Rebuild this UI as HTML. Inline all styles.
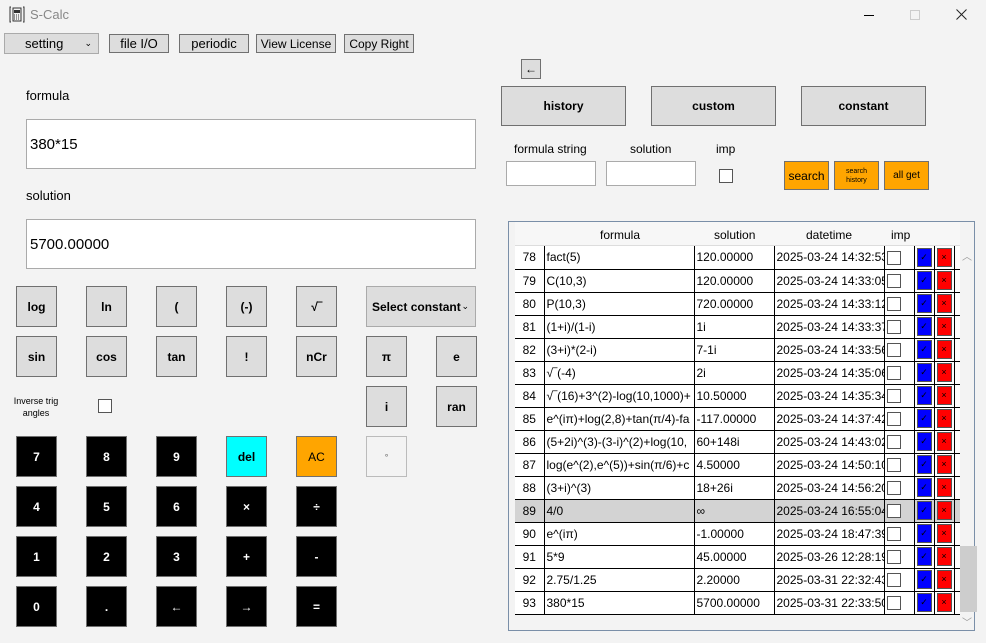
<!DOCTYPE html>
<html><head><meta charset="utf-8"><style>
*{box-sizing:border-box;margin:0;padding:0}
body{width:986px;height:643px;background:#f3f3f3;font-family:"Liberation Sans","DejaVu Sans",sans-serif;font-size:12px;color:#000;position:relative;overflow:hidden}
.a{position:absolute}
.btn{position:absolute;background:#dddddd;border:1px solid #707070;display:flex;align-items:center;justify-content:center;font-size:12px}
.k{width:41px;height:41px;font-weight:bold}
.blk{background:#000;color:#fff;border:1px solid #707070}
.tb{position:absolute;background:#fff;border:1px solid #aaa;font-size:15px;display:flex;align-items:center;padding-left:3px}
table{border-collapse:collapse;table-layout:fixed;font-size:12px}
td{height:23px;border-bottom:1px solid #000;border-left:1px solid #000;white-space:nowrap;overflow:hidden;padding:0 2px}
td.n{border-left:none;text-align:center}
.cb{display:inline-block;width:14px;height:14px;border:1px solid #555;background:#fff;vertical-align:middle}
.bl{display:block;width:15px;height:19px;background:#0000ff;border:1px solid #555;font-size:9px;color:#000;text-align:center;line-height:17px}
.rd{display:block;width:15px;height:19px;background:#ff0000;border:1px solid #555;font-size:9px;color:#000;text-align:center;line-height:17px}
</style></head><body>
<svg class="a" style="left:9px;top:6px" width="16" height="17" viewBox="0 0 16 17"><path d="M2 1H1V16H2M14 1H15V16H14" stroke="#333" fill="none"/><rect x="4" y="2" width="8" height="13" fill="none" stroke="#333"/><rect x="5" y="4" width="6" height="3" fill="#333"/><path d="M5 9h1M7 9h1M9 9h1M5 11h1M7 11h1M9 11h1M5 13h1M7 13h1M9 13h1" stroke="#333"/></svg>
<div class="a" style="left:30px;top:7px;font-size:13px;color:#888">S-Calc</div>
<div class="a" style="left:864px;top:15px;width:10px;height:1px;background:#000"></div>
<div class="a" style="left:910px;top:10px;width:10px;height:10px;border:1px solid #ccc"></div>
<svg class="a" style="left:956px;top:9px" width="11" height="11"><path d="M0.5 0.5L10.5 10.5M10.5 0.5L0.5 10.5" stroke="#222" stroke-width="1"/></svg>

<div class="btn" style="left:4px;top:33px;width:95px;height:21px;border-color:#aaa;justify-content:flex-start;padding-left:20px;font-size:13px">setting<span style="position:absolute;right:6px;font-size:9px">⌄</span></div>
<div class="btn" style="left:109px;top:34px;width:60px;height:19px;font-size:13px">file I/O</div>
<div class="btn" style="left:179px;top:34px;width:70px;height:19px;font-size:13px">periodic</div>
<div class="btn" style="left:256px;top:34px;width:80px;height:19px;font-size:12px">View License</div>
<div class="btn" style="left:344px;top:34px;width:70px;height:19px;font-size:12px">Copy Right</div>

<div class="a" style="left:26px;top:88px;font-size:13px">formula</div>
<div class="tb" style="left:26px;top:119px;width:450px;height:50px">380*15</div>
<div class="a" style="left:26px;top:188px;font-size:13px">solution</div>
<div class="tb" style="left:26px;top:219px;width:450px;height:50px">5700.00000</div>

<div class="btn k" style="left:16px;top:286px">log</div>
<div class="btn k" style="left:86px;top:286px">ln</div>
<div class="btn k" style="left:156px;top:286px">(</div>
<div class="btn k" style="left:226px;top:286px">(-)</div>
<div class="btn k" style="left:296px;top:286px">√‾</div>
<div class="btn" style="left:366px;top:286px;width:110px;height:41px;border-color:#aaa;font-weight:bold;justify-content:flex-start;padding-left:5px">Select constant<span style="position:absolute;right:6px;font-size:9px;font-weight:normal">⌄</span></div>
<div class="btn k" style="left:16px;top:336px">sin</div>
<div class="btn k" style="left:86px;top:336px">cos</div>
<div class="btn k" style="left:156px;top:336px">tan</div>
<div class="btn k" style="left:226px;top:336px">!</div>
<div class="btn k" style="left:296px;top:336px">nCr</div>
<div class="btn k" style="left:366px;top:336px">π</div>
<div class="btn k" style="left:436px;top:336px">e</div>
<div class="a" style="left:8px;top:395px;width:56px;font-size:9px;text-align:center;line-height:12px">Inverse trig angles</div>
<div class="a" style="left:98px;top:399px;width:14px;height:14px;border:1px solid #555;background:#fff"></div>
<div class="btn k" style="left:366px;top:386px">i</div>
<div class="btn k" style="left:436px;top:386px">ran</div>
<div class="btn k blk" style="left:16px;top:436px">7</div>
<div class="btn k blk" style="left:86px;top:436px">8</div>
<div class="btn k blk" style="left:156px;top:436px">9</div>
<div class="btn k" style="left:226px;top:436px;background:#00ffff">del</div>
<div class="btn k" style="left:296px;top:436px;background:#ffa500;font-weight:normal">AC</div>
<div class="btn k" style="left:366px;top:436px;background:#f3f3f3;border-color:#bbb;color:#888;font-size:9px">°</div>
<div class="btn k blk" style="left:16px;top:486px">4</div>
<div class="btn k blk" style="left:86px;top:486px">5</div>
<div class="btn k blk" style="left:156px;top:486px">6</div>
<div class="btn k blk" style="left:226px;top:486px">×</div>
<div class="btn k blk" style="left:296px;top:486px">÷</div>
<div class="btn k blk" style="left:16px;top:536px">1</div>
<div class="btn k blk" style="left:86px;top:536px">2</div>
<div class="btn k blk" style="left:156px;top:536px">3</div>
<div class="btn k blk" style="left:226px;top:536px">+</div>
<div class="btn k blk" style="left:296px;top:536px">-</div>
<div class="btn k blk" style="left:16px;top:586px">0</div>
<div class="btn k blk" style="left:86px;top:586px">.</div>
<div class="btn k blk" style="left:156px;top:586px">←</div>
<div class="btn k blk" style="left:226px;top:586px">→</div>
<div class="btn k blk" style="left:296px;top:586px">=</div>

<div class="btn" style="left:521px;top:59px;width:20px;height:20px">←</div>
<div class="btn" style="left:501px;top:86px;width:125px;height:40px;font-weight:bold">history</div>
<div class="btn" style="left:651px;top:86px;width:125px;height:40px;font-weight:bold">custom</div>
<div class="btn" style="left:801px;top:86px;width:125px;height:40px;font-weight:bold">constant</div>
<div class="a" style="left:514px;top:142px">formula string</div>
<div class="a" style="left:630px;top:142px">solution</div>
<div class="a" style="left:716px;top:142px">imp</div>
<div class="a" style="left:506px;top:161px;width:90px;height:25px;background:#fff;border:1px solid #aaa"></div>
<div class="a" style="left:606px;top:161px;width:90px;height:25px;background:#fff;border:1px solid #aaa"></div>
<div class="a" style="left:719px;top:169px;width:14px;height:14px;background:#fff;border:1px solid #555"></div>
<div class="btn" style="left:784px;top:161px;width:45px;height:29px;background:#ffa500">search</div>
<div class="btn" style="left:834px;top:161px;width:45px;height:29px;background:#ffa500;font-size:7px;line-height:9px;text-align:center">search<br>history</div>
<div class="btn" style="left:884px;top:161px;width:45px;height:29px;background:#ffa500;font-size:10px">all get</div>

<div class="a" style="left:508px;top:221px;width:467px;height:410px;border:1px solid #7a8fa8;background:#f3f3f3"></div>
<div class="a" style="left:515px;top:222px;width:445px;height:24px;background:#f7f7f7;border-bottom:1px solid #ddd"></div>
<div class="a" style="left:600px;top:228px">formula</div>
<div class="a" style="left:714px;top:228px">solution</div>
<div class="a" style="left:806px;top:228px">datetime</div>
<div class="a" style="left:891px;top:228px">imp</div>
<div class="a" style="left:962px;top:248px;color:#999;font-size:10px">︿</div>
<div class="a" style="left:960px;top:546px;width:17px;height:66px;background:#cdcdcd"></div>
<div class="a" style="left:962px;top:614px;color:#999;font-size:10px">﹀</div>
<table class="a" style="left:515px;top:246px;width:445px">
<colgroup><col style="width:29px"><col style="width:150px"><col style="width:80px"><col style="width:110px"><col style="width:30px"><col style="width:20px"><col style="width:20px"><col style="width:6px"></colgroup>
<tbody style="background:#fff">
<tr><td class="n">78</td><td>fact(5)</td><td>120.00000</td><td>2025-03-24 14:32:53</td><td><span class="cb"></span></td><td><span class="bl">✓</span></td><td><span class="rd">×</span></td><td></td></tr>
<tr><td class="n">79</td><td>C(10,3)</td><td>120.00000</td><td>2025-03-24 14:33:05</td><td><span class="cb"></span></td><td><span class="bl">✓</span></td><td><span class="rd">×</span></td><td></td></tr>
<tr><td class="n">80</td><td>P(10,3)</td><td>720.00000</td><td>2025-03-24 14:33:12</td><td><span class="cb"></span></td><td><span class="bl">✓</span></td><td><span class="rd">×</span></td><td></td></tr>
<tr><td class="n">81</td><td>(1+i)/(1-i)</td><td>1i</td><td>2025-03-24 14:33:37</td><td><span class="cb"></span></td><td><span class="bl">✓</span></td><td><span class="rd">×</span></td><td></td></tr>
<tr><td class="n">82</td><td>(3+i)*(2-i)</td><td>7-1i</td><td>2025-03-24 14:33:56</td><td><span class="cb"></span></td><td><span class="bl">✓</span></td><td><span class="rd">×</span></td><td></td></tr>
<tr><td class="n">83</td><td>√‾(-4)</td><td>2i</td><td>2025-03-24 14:35:06</td><td><span class="cb"></span></td><td><span class="bl">✓</span></td><td><span class="rd">×</span></td><td></td></tr>
<tr><td class="n">84</td><td>√‾(16)+3^(2)-log(10,1000)+</td><td>10.50000</td><td>2025-03-24 14:35:34</td><td><span class="cb"></span></td><td><span class="bl">✓</span></td><td><span class="rd">×</span></td><td></td></tr>
<tr><td class="n">85</td><td>e^(iπ)+log(2,8)+tan(π/4)-fa</td><td>-117.00000</td><td>2025-03-24 14:37:42</td><td><span class="cb"></span></td><td><span class="bl">✓</span></td><td><span class="rd">×</span></td><td></td></tr>
<tr><td class="n">86</td><td>(5+2i)^(3)-(3-i)^(2)+log(10,</td><td>60+148i</td><td>2025-03-24 14:43:02</td><td><span class="cb"></span></td><td><span class="bl">✓</span></td><td><span class="rd">×</span></td><td></td></tr>
<tr><td class="n">87</td><td>log(e^(2),e^(5))+sin(π/6)+c</td><td>4.50000</td><td>2025-03-24 14:50:10</td><td><span class="cb"></span></td><td><span class="bl">✓</span></td><td><span class="rd">×</span></td><td></td></tr>
<tr><td class="n">88</td><td>(3+i)^(3)</td><td>18+26i</td><td>2025-03-24 14:56:20</td><td><span class="cb"></span></td><td><span class="bl">✓</span></td><td><span class="rd">×</span></td><td></td></tr>
<tr style="background:#d3d3d3"><td class="n">89</td><td>4/0</td><td>∞</td><td>2025-03-24 16:55:04</td><td><span class="cb"></span></td><td><span class="bl">✓</span></td><td><span class="rd">×</span></td><td></td></tr>
<tr><td class="n">90</td><td>e^(iπ)</td><td>-1.00000</td><td>2025-03-24 18:47:39</td><td><span class="cb"></span></td><td><span class="bl">✓</span></td><td><span class="rd">×</span></td><td></td></tr>
<tr><td class="n">91</td><td>5*9</td><td>45.00000</td><td>2025-03-26 12:28:19</td><td><span class="cb"></span></td><td><span class="bl">✓</span></td><td><span class="rd">×</span></td><td></td></tr>
<tr><td class="n">92</td><td>2.75/1.25</td><td>2.20000</td><td>2025-03-31 22:32:43</td><td><span class="cb"></span></td><td><span class="bl">✓</span></td><td><span class="rd">×</span></td><td></td></tr>
<tr><td class="n">93</td><td>380*15</td><td>5700.00000</td><td>2025-03-31 22:33:50</td><td><span class="cb"></span></td><td><span class="bl">✓</span></td><td><span class="rd">×</span></td><td></td></tr>
</tbody></table>
</body></html>
